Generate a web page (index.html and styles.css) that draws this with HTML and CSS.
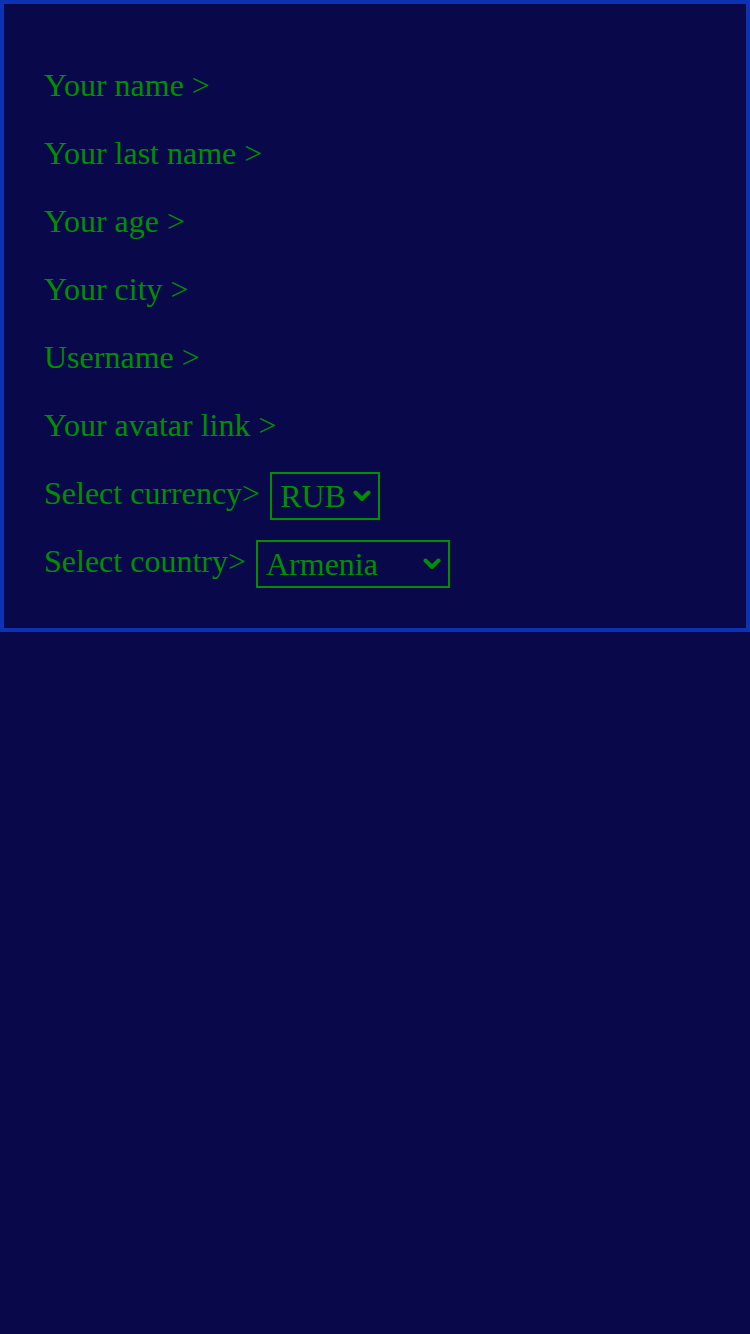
FILE: index.html
```html
<!DOCTYPE html>
<html lang="en">
<head>
<meta charset="utf-8">
<title>Profile</title>
<link rel="stylesheet" href="styles.css">
</head>
<body>
<main class="panel">
  <div class="row">Your name &gt;</div>
  <div class="row">Your last name &gt;</div>
  <div class="row">Your age &gt;</div>
  <div class="row">Your city &gt;</div>
  <div class="row">Username &gt;</div>
  <div class="row">Your avatar link &gt;</div>
  <div class="row">Select currency&gt; <select class="sel sel-currency"><option>RUB</option><option>USD</option><option>EUR</option></select></div>
  <div class="row">Select country&gt; <select class="sel sel-country"><option>Armenia</option><option>Russia</option><option>Kazakhstan</option></select></div>
</main>
</body>
</html>
```
FILE: styles.css
```css
html, body {
  margin: 0;
  background: #08084a;
}
body {
  font-family: "Liberation Serif", "Times New Roman", serif;
  color: #008f00;
}
.panel {
  border: 4px solid #0d33b4;
  padding: 47px 40px 33px 40px;
  display: flex;
  flex-direction: column;
}
.row {
  font-size: 32px;
  height: 68px;
  line-height: 68px;
  white-space: nowrap;
}
.sel {
  -webkit-appearance: none;
  appearance: none;
  font-family: inherit;
  font-size: 32px;
  line-height: normal;
  color: #008f00;
  background-color: transparent;
  background-image: url("data:image/svg+xml;utf8,<svg xmlns='http://www.w3.org/2000/svg' width='18' height='12' viewBox='0 0 18 12'><path d='M2.5 2.5 L9 9 L15.5 2.5' fill='none' stroke='%23008f00' stroke-width='4' stroke-linecap='round' stroke-linejoin='round'/></svg>");
  background-repeat: no-repeat;
  background-position: right 7px center;
  background-size: 18px 12px;
  border: 2px solid #008f00;
  border-radius: 0;
  height: 48px;
  margin-left: 2px;
  padding: 0 28px 0 8px;
  vertical-align: -3px;
  outline: none;
}
.sel-currency { width: 110px; }
.sel-country { width: 194px; }
```
